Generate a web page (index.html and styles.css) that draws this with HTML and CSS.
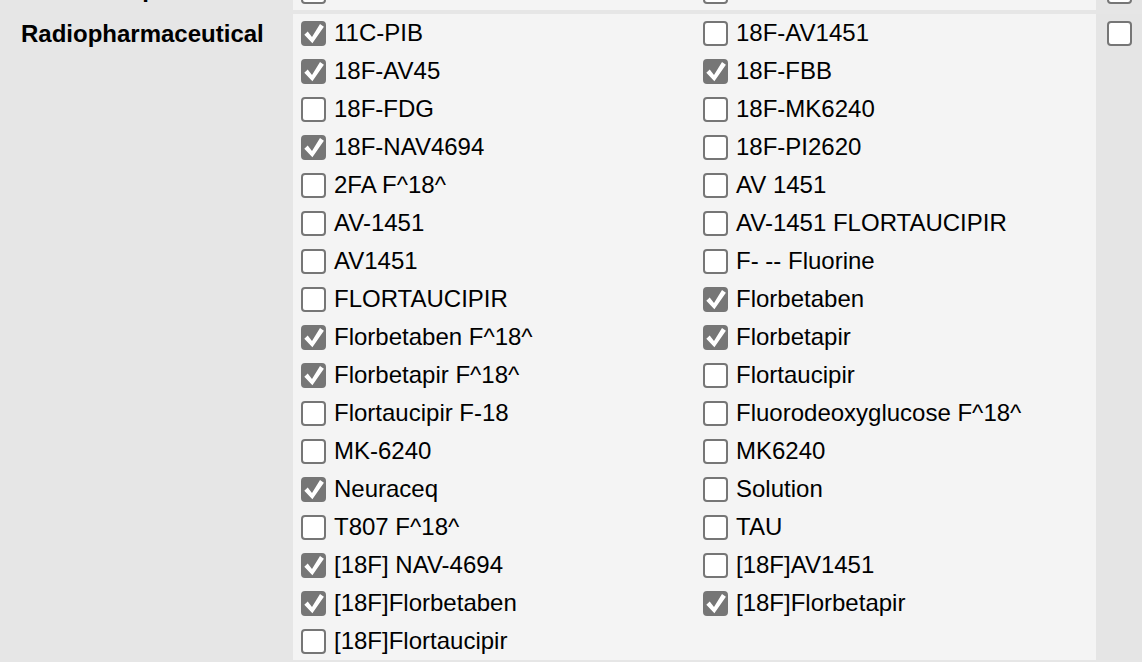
FILE: index.html
```html
<!DOCTYPE html>
<html lang="en">
<head>
<meta charset="utf-8">
<title>Radiopharmaceutical filter</title>
<link rel="stylesheet" href="styles.css">
</head>
<body>
<div class="form">
  <div class="row row-prev">
    <div class="label">Scan Group</div>
    <div class="options">
      <label class="opt"><input type="checkbox" class="cb"><span>MRI</span></label>
      <label class="opt"><input type="checkbox" class="cb"><span>PET</span></label>
    </div>
    <div class="extra"><div class="extra-line"><input type="checkbox" class="cb"></div></div>
  </div>

  <div class="row">
    <div class="label">Radiopharmaceutical</div>
    <div class="options">
      <label class="opt"><input type="checkbox" class="cb" checked><span>11C-PIB</span></label>
      <label class="opt"><input type="checkbox" class="cb"><span>18F-AV1451</span></label>
      <label class="opt"><input type="checkbox" class="cb" checked><span>18F-AV45</span></label>
      <label class="opt"><input type="checkbox" class="cb" checked><span>18F-FBB</span></label>
      <label class="opt"><input type="checkbox" class="cb"><span>18F-FDG</span></label>
      <label class="opt"><input type="checkbox" class="cb"><span>18F-MK6240</span></label>
      <label class="opt"><input type="checkbox" class="cb" checked><span>18F-NAV4694</span></label>
      <label class="opt"><input type="checkbox" class="cb"><span>18F-PI2620</span></label>
      <label class="opt"><input type="checkbox" class="cb"><span>2FA F^18^</span></label>
      <label class="opt"><input type="checkbox" class="cb"><span>AV 1451</span></label>
      <label class="opt"><input type="checkbox" class="cb"><span>AV-1451</span></label>
      <label class="opt"><input type="checkbox" class="cb"><span>AV-1451 FLORTAUCIPIR</span></label>
      <label class="opt"><input type="checkbox" class="cb"><span>AV1451</span></label>
      <label class="opt"><input type="checkbox" class="cb"><span>F- -- Fluorine</span></label>
      <label class="opt"><input type="checkbox" class="cb"><span>FLORTAUCIPIR</span></label>
      <label class="opt"><input type="checkbox" class="cb" checked><span>Florbetaben</span></label>
      <label class="opt"><input type="checkbox" class="cb" checked><span>Florbetaben F^18^</span></label>
      <label class="opt"><input type="checkbox" class="cb" checked><span>Florbetapir</span></label>
      <label class="opt"><input type="checkbox" class="cb" checked><span>Florbetapir F^18^</span></label>
      <label class="opt"><input type="checkbox" class="cb"><span>Flortaucipir</span></label>
      <label class="opt"><input type="checkbox" class="cb"><span>Flortaucipir F-18</span></label>
      <label class="opt"><input type="checkbox" class="cb"><span>Fluorodeoxyglucose F^18^</span></label>
      <label class="opt"><input type="checkbox" class="cb"><span>MK-6240</span></label>
      <label class="opt"><input type="checkbox" class="cb"><span>MK6240</span></label>
      <label class="opt"><input type="checkbox" class="cb" checked><span>Neuraceq</span></label>
      <label class="opt"><input type="checkbox" class="cb"><span>Solution</span></label>
      <label class="opt"><input type="checkbox" class="cb"><span>T807 F^18^</span></label>
      <label class="opt"><input type="checkbox" class="cb"><span>TAU</span></label>
      <label class="opt"><input type="checkbox" class="cb" checked><span>[18F] NAV-4694</span></label>
      <label class="opt"><input type="checkbox" class="cb"><span>[18F]AV1451</span></label>
      <label class="opt"><input type="checkbox" class="cb" checked><span>[18F]Florbetaben</span></label>
      <label class="opt"><input type="checkbox" class="cb" checked><span>[18F]Florbetapir</span></label>
      <label class="opt"><input type="checkbox" class="cb"><span>[18F]Flortaucipir</span></label>
    </div>
    <div class="extra"><div class="extra-line"><input type="checkbox" class="cb"></div></div>
  </div>

  <div class="rule"></div>
</div>
</body>
</html>
```

FILE: styles.css
```css
html, body {
  margin: 0;
  padding: 0;
}

body {
  background: #e6e6e6;
  color: #000;
  font-family: "Liberation Sans", Arial, sans-serif;
  overflow: hidden;
  height: 662px;
}

.form {
  display: flex;
  flex-direction: column;
  gap: 4px;
}

.row {
  display: grid;
  grid-template-columns: 293px 803px 46px;
}

.row-prev {
  margin-top: -28px;
  height: 38px;
}

.label {
  padding: 6px 0 0 21px;
  font-weight: bold;
  font-size: 24px;
  line-height: normal;
  white-space: nowrap;
}

.row-prev .label {
  padding-top: 3px;
}

.options {
  background: #f4f4f4;
  display: grid;
  grid-template-columns: 402px 1fr;
  grid-auto-rows: 38px;
  padding-left: 8px;
}

.opt {
  display: flex;
  align-items: center;
  font-size: 24px;
  line-height: normal;
  white-space: nowrap;
}

.extra {
  background: #e5e5e5;
  padding-left: 11px;
}

.extra-line {
  height: 38px;
  display: flex;
  align-items: center;
}

.cb {
  appearance: none;
  -webkit-appearance: none;
  position: relative;
  flex: none;
  width: 25px;
  height: 25px;
  margin: 0 8px 0 0;
  box-sizing: border-box;
  border: 2px solid #767676;
  border-radius: 4px;
  background: #fff;
}

.cb:checked {
  background: #767676;
}

.cb:checked::before {
  content: "";
  position: absolute;
  left: 0;
  top: 0;
  width: 21px;
  height: 21px;
  background: #fff;
  clip-path: polygon(4.7px 9.1px, 9px 14.4px, 17px 1.6px, 20.9px 4.3px, 9.4px 20.8px, 1.3px 12.3px);
}

.rule {
  height: 4px;
  background: #595959;
}
```
